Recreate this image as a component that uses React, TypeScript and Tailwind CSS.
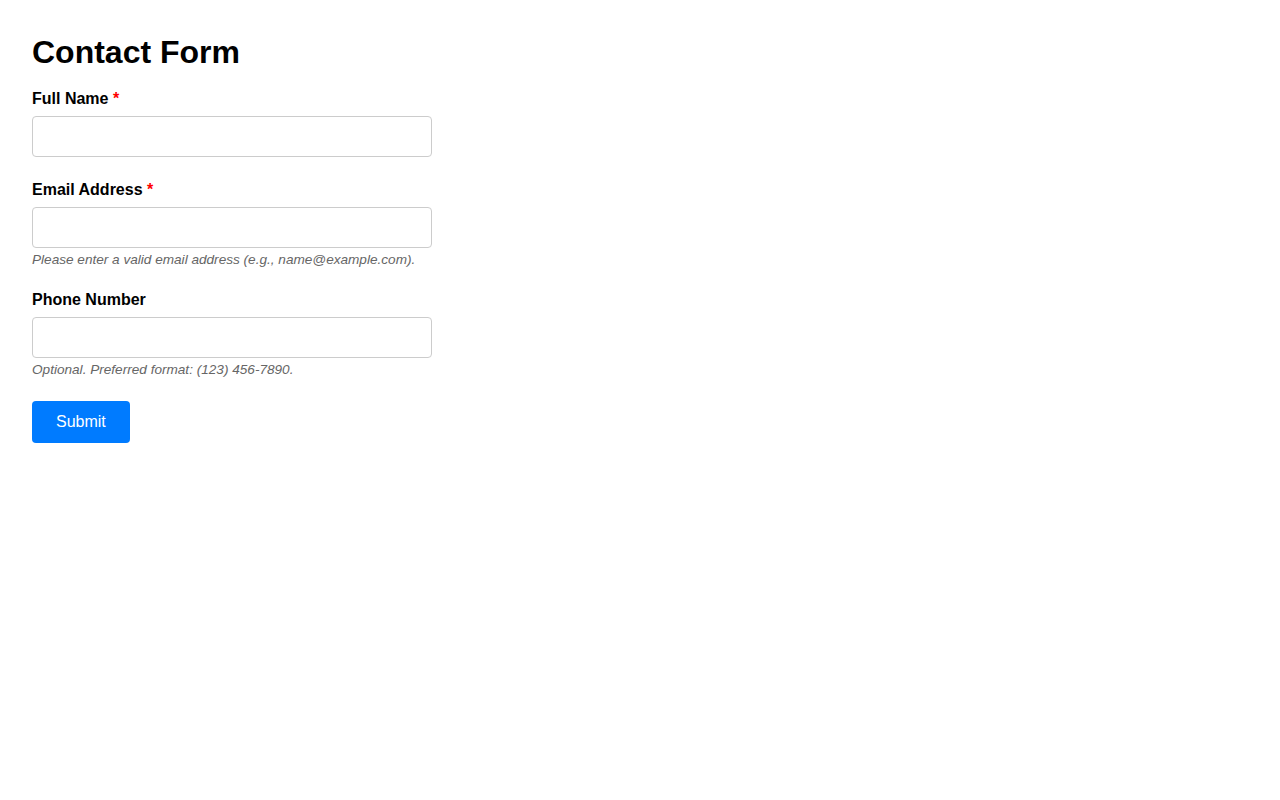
import React from 'react'

type FieldProps = {
  id: string;
  label: string;
  type: string;
  required?: boolean;
  hint?: string;
};

function Field({ id, label, type, required, hint }: FieldProps) {
  return (
    <div className="mb-6">
      <label htmlFor={id} className="block mb-2 text-base leading-[18px] font-bold text-black">
        {label}
        {required ? <span className="text-[#ff0000]"> *</span> : null}
      </label>
      <input
        id={id}
        type={type}
        required={required}
        className="block w-[400px] h-[41px] px-2 border border-[#cccccc] rounded-[4px] bg-white text-base outline-none"
      />
      {hint ? (
        <p className="mt-1 text-[13.6px] leading-[15px] italic text-[#666666]">{hint}</p>
      ) : null}
    </div>
  )
}

export default function App() {
  return (
    <div className="min-h-screen bg-white px-8 pt-[34px] font-['Liberation_Sans',Arial,sans-serif] text-black">
      <h1 className="mb-5 text-[32px] leading-[36px] font-bold">Contact Form</h1>
      <form onSubmit={(e) => e.preventDefault()}>
        <Field id="name" label="Full Name" type="text" required />
        <Field
          id="email"
          label="Email Address"
          type="email"
          required
          hint="Please enter a valid email address (e.g., name@example.com)."
        />
        <Field
          id="phone"
          label="Phone Number"
          type="tel"
          hint="Optional. Preferred format: (123) 456-7890."
        />
        <button
          type="submit"
          className="px-6 py-3 text-base leading-[18px] text-white bg-[#007bff] rounded-[4px] cursor-pointer"
        >
          Submit
        </button>
      </form>
    </div>
  )
}
